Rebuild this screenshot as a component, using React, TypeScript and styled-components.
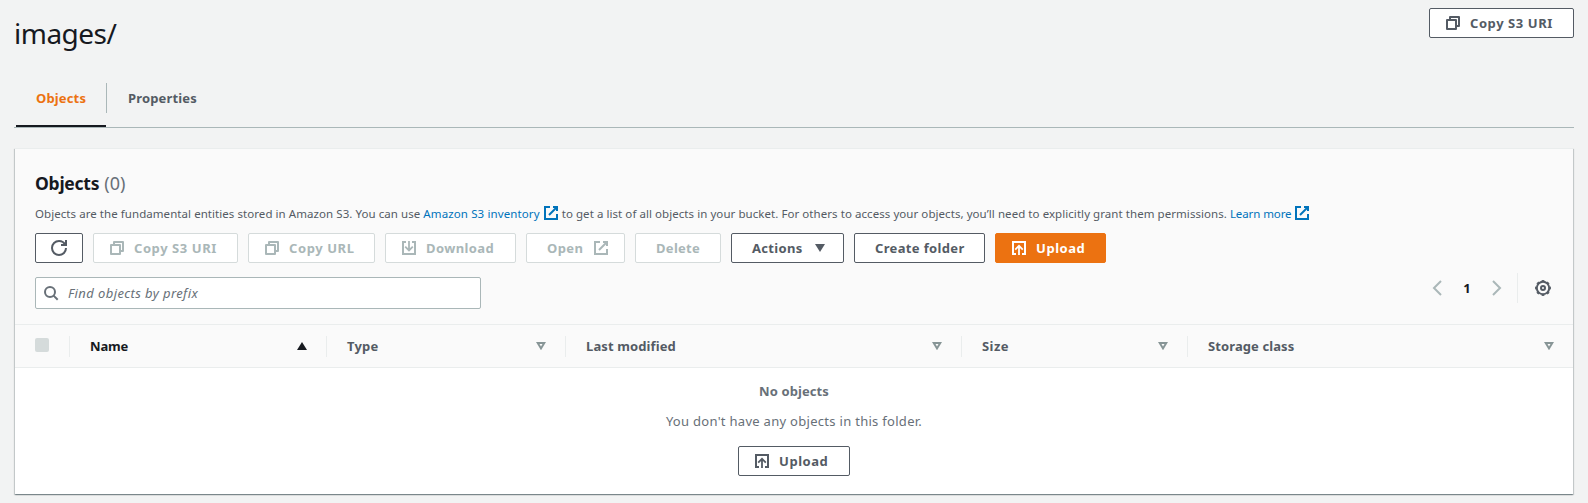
import React from 'react';
import styled, { createGlobalStyle, css } from 'styled-components';

const Global = createGlobalStyle`
  * { box-sizing: border-box; }
  body {
    margin: 0;
    background: #f2f3f3;
    color: #545b64;
    font-family: "Noto Sans", "Open Sans", sans-serif;
    font-size: 13px;
    line-height: 20px;
  }
`;

/* ---------- icons ---------- */

const Svg = styled.svg`
  display: block;
  flex: none;
  width: 16px;
  height: 16px;
  fill: none;
  stroke: currentColor;
  stroke-width: 2;
`;

const CopyIcon = () => (
  <Svg viewBox="0 0 16 16" strokeLinejoin="round">
    <path d="M2 5h9v9H2z" />
    <path d="M5 5V2h9v9h-3" />
  </Svg>
);
const DownloadIcon = () => (
  <Svg viewBox="0 0 16 16">
    <path d="M5 2H2v12h12V2h-3" />
    <path d="M8 1v9M4.2 6.6 8 10.4l3.8-3.8" strokeWidth="1.8" />
  </Svg>
);
const UploadIcon = () => (
  <Svg viewBox="0 0 16 16">
    <path d="M5 14H2V2h12v12h-3" />
    <path d="M8 15V6M4.2 9.6 8 5.8l3.8 3.8" strokeWidth="1.8" />
  </Svg>
);
const ExternalIcon = () => (
  <Svg viewBox="0 0 16 16">
    <path d="M10 2h4v4" />
    <path d="m6 10 8-8" />
    <path d="M14 9v5H2V2h5" />
  </Svg>
);
const RefreshIcon = () => (
  <Svg viewBox="0 0 16 16">
    <path d="M15 8c0 3.87-3.13 7-7 7s-7-3.13-7-7 3.13-7 7-7c2.79 0 5.2 1.63 6.33 4" />
    <path d="M10 5h5V0" />
  </Svg>
);
const SearchIcon = () => (
  <Svg viewBox="0 0 16 16">
    <circle cx="7" cy="7" r="5" />
    <path d="m10.6 10.6 4.1 4.1" />
  </Svg>
);
const ChevronIcon = ({ next }: { next?: boolean }) => (
  <Svg viewBox="0 0 16 16">
    <path d={next ? 'm4 1 7 7-7 7' : 'm12 1-7 7 7 7'} />
  </Svg>
);
const GearIcon = () => (
  <Svg viewBox="0 0 16 16">
    <circle cx="8" cy="8" r="6.2" />
    <circle cx="8" cy="8" r="7.3" strokeWidth="1.3" pathLength="80" strokeDasharray="5 5" strokeDashoffset="2.5" />
    <circle cx="8" cy="8" r="2" />
  </Svg>
);

const Triangle = styled.svg`
  display: block;
  flex: none;
  width: 10px;
  height: 8px;
`;
const CaretDown = () => (
  <Triangle viewBox="0 0 10 8">
    <path d="M0 0h10L5 8z" fill="currentColor" />
  </Triangle>
);
const SortedAsc = () => (
  <Triangle viewBox="0 0 10 8">
    <path d="M0 8h10L5 0z" fill="#16191f" />
  </Triangle>
);
const Sortable = () => (
  <Triangle viewBox="0 0 10 8">
    <path d="M0 0h10L5 8.3zM3.5 2 5 4.6 6.5 2z" fill="#879596" fillRule="evenodd" />
  </Triangle>
);

/* ---------- page ---------- */

const Page = styled.main`
  display: flex;
  flex-direction: column;
  height: 503px;
  padding: 8px 14px 0;
  overflow: hidden;
`;

const Header = styled.header`
  display: flex;
  justify-content: space-between;
  align-items: flex-start;
  height: 65px;
`;

const PageTitle = styled.h1`
  margin: 7px 0 0;
  color: #16191f;
  font-size: 28px;
  font-weight: 400;
  line-height: 36px;
  letter-spacing: -0.5px;
`;

const Tabs = styled.nav`
  display: flex;
  height: 55px;
  padding-left: 2px;
  border-bottom: 1px solid #aab7b8;
`;

const Tab = styled.a<{ $active?: boolean }>`
  display: flex;
  height: 54px;
  width: ${(p) => (p.$active ? 90 : 111)}px;
  padding: 15px 0 0 ${(p) => (p.$active ? 20 : 21)}px;
  color: ${(p) => (p.$active ? '#ec7211' : '#545b64')};
  border-bottom: ${(p) => (p.$active ? '2px solid #16191f' : '0')};
  font-weight: 700;
  letter-spacing: 0.15px;
`;

const TabDivider = styled.span`
  width: 1px;
  height: 30px;
  margin-top: 10px;
  background: #aab7b8;
`;

const Button = styled.button<{ $w: number; $kind?: 'disabled' | 'primary'; $text?: boolean; $ls?: number }>`
  display: flex;
  align-items: center;
  flex: none;
  gap: 9px;
  width: ${(p) => p.$w}px;
  height: 30px;
  padding: 0 15px 0 ${(p) => (p.$text ? 20 : 15)}px;
  border: 1px solid #545b64;
  border-radius: 2px;
  background: #fff;
  color: #545b64;
  font: 700 13px/20px "Noto Sans", "Open Sans", sans-serif;
  letter-spacing: ${(p) => p.$ls ?? 0.4}px;
  white-space: nowrap;
  ${(p) => p.$kind === 'disabled' && css`
    border-color: #d5dbdb;
    color: #aab7b8;
  `}
  ${(p) => p.$kind === 'primary' && css`
    border-color: #ec7211;
    background: #ec7211;
    color: #fff;
  `}
`;

const ButtonEnd = styled.span<{ $inset?: number }>`
  margin-left: auto;
  margin-right: ${(p) => p.$inset ?? 0}px;
`;

const Panel = styled.section`
  margin: 20px 1px 0;
  height: 346px;
  border-top: 1px solid #eaeded;
  background: #fff;
  box-shadow: 0 1px 1px 0 rgba(0, 28, 36, 0.3), 1px 1px 1px 0 rgba(0, 28, 36, 0.15),
    -1px 1px 1px 0 rgba(0, 28, 36, 0.15);
`;

const PanelHeader = styled.div`
  height: 176px;
  padding: 22px 20px 0;
  background: #fafafa;
  border-bottom: 1px solid #eaeded;
`;

const PanelTitle = styled.h2`
  display: flex;
  gap: 5px;
  margin: 0;
  color: #16191f;
  font-size: 17.5px;
  line-height: 24px;
  letter-spacing: -0.25px;
`;

const Counter = styled.span`
  color: #687078;
  font-weight: 400;
  font-size: 18px;
  letter-spacing: 0;
`;

const Description = styled.p`
  display: flex;
  align-items: center;
  height: 16px;
  margin: 11px 0 0;
  font-size: 11.5px;
  line-height: 16px;
  letter-spacing: 0.06px;
  white-space: nowrap;
`;

const Link = styled.a<{ $ls: number }>`
  display: flex;
  align-items: center;
  gap: 3px;
  margin: 0 3px;
  color: #0073bb;
  letter-spacing: ${(p) => p.$ls}px;
  svg { position: relative; top: -1px; }
`;

const Actions = styled.div`
  display: flex;
  gap: 10px;
  margin-top: 11px;
`;

const Filters = styled.div`
  display: flex;
  justify-content: space-between;
  align-items: flex-start;
  margin-top: 10px;
`;

const Search = styled.label`
  display: flex;
  align-items: center;
  gap: 9px;
  width: 446px;
  height: 32px;
  margin-top: 4px;
  padding: 0 7px;
  border: 1px solid #aab7b8;
  border-radius: 2px;
  background: #fff;
  color: #687078;
`;

const SearchInput = styled.input`
  flex: 1;
  padding: 0;
  border: 0;
  outline: 0;
  background: none;
  font: 13px/20px "Noto Sans", "Open Sans", sans-serif;
  letter-spacing: 0.4px;
  &::placeholder { color: #687078; font-style: italic; opacity: 1; }
`;

const Pagination = styled.div`
  display: flex;
  align-items: center;
  height: 30px;
  color: #aab7b8;
`;

const PageNumber = styled.span`
  width: 44px;
  color: #16191f;
  font-weight: 700;
  text-align: center;
`;

const Preferences = styled.span`
  display: flex;
  align-items: center;
  height: 30px;
  margin-left: 12px;
  padding: 0 2px 0 17px;
  border-left: 1px solid #eaeded;
  color: #545b64;
`;

const HeadRow = styled.div`
  display: grid;
  grid-template-columns: 55px 257px 239px 396px 226px 1fr;
  align-items: center;
  height: 43px;
  background: #fafafa;
  border-bottom: 1px solid #eaeded;
`;

const HeadCell = styled.div<{ $sorted?: boolean; $ls?: number }>`
  display: flex;
  align-items: center;
  justify-content: space-between;
  height: 21px;
  padding: 0 19px 0 20px;
  border-right: 1px solid #eaeded;
  color: ${(p) => (p.$sorted ? '#16191f' : '#545b64')};
  font-weight: 700;
  letter-spacing: ${(p) => p.$ls ?? 0.12}px;
  &:last-child { border-right: 0; }
`;

const Checkbox = styled.span`
  width: 14px;
  height: 14px;
  margin-bottom: 2px;
  border-radius: 2px;
  background: #d5dbdb;
`;

const Empty = styled.div`
  display: flex;
  flex-direction: column;
  align-items: center;
  padding-top: 13px;
  color: #687078;
`;

const EmptyTitle = styled.strong`
  font-weight: 700;
  letter-spacing: 0.1px;
`;

const EmptyText = styled.p`
  margin: 10px 0 15px;
  letter-spacing: 0.29px;
`;

export default function App() {
  return (
    <>
      <Global />
      <Page>
        <Header>
          <PageTitle>images/</PageTitle>
          <Button $w={145} $ls={0.57}><CopyIcon />Copy S3 URI</Button>
        </Header>
        <Tabs>
          <Tab $active>Objects</Tab>
          <TabDivider />
          <Tab>Properties</Tab>
        </Tabs>
        <Panel>
          <PanelHeader>
            <PanelTitle>Objects <Counter>(0)</Counter></PanelTitle>
            <Description>
              Objects are the fundamental entities stored in Amazon S3. You can use
              <Link $ls={0.12}>Amazon S3 inventory <ExternalIcon /></Link>
              to get a list of all objects in your bucket. For others to access your objects, you’ll need to explicitly grant them permissions.
              <Link $ls={-0.1}>Learn more <ExternalIcon /></Link>
            </Description>
            <Actions>
              <Button $w={48}><RefreshIcon /></Button>
              <Button $w={145} $kind="disabled" $ls={0.57}><CopyIcon />Copy S3 URI</Button>
              <Button $w={127} $kind="disabled" $ls={0.58}><CopyIcon />Copy URL</Button>
              <Button $w={131} $kind="disabled"><DownloadIcon />Download</Button>
              <Button $w={99} $kind="disabled" $text>Open<ButtonEnd><ExternalIcon /></ButtonEnd></Button>
              <Button $w={86} $kind="disabled" $text $ls={0.3}>Delete</Button>
              <Button $w={113} $text $ls={0.32}>Actions<ButtonEnd $inset={3}><CaretDown /></ButtonEnd></Button>
              <Button $w={131} $text $ls={0.35}>Create folder</Button>
              <Button $w={111} $kind="primary" $ls={0.55}><UploadIcon />Upload</Button>
            </Actions>
            <Filters>
              <Search>
                <SearchIcon />
                <SearchInput placeholder="Find objects by prefix" />
              </Search>
              <Pagination>
                <ChevronIcon />
                <PageNumber>1</PageNumber>
                <ChevronIcon next />
                <Preferences><GearIcon /></Preferences>
              </Pagination>
            </Filters>
          </PanelHeader>
          <HeadRow>
            <HeadCell><Checkbox /></HeadCell>
            <HeadCell $sorted $ls={-0.15}>Name<SortedAsc /></HeadCell>
            <HeadCell $ls={0.2}>Type<Sortable /></HeadCell>
            <HeadCell>Last modified<Sortable /></HeadCell>
            <HeadCell $ls={0.45}>Size<Sortable /></HeadCell>
            <HeadCell $ls={0.1}>Storage class<Sortable /></HeadCell>
          </HeadRow>
          <Empty>
            <EmptyTitle>No objects</EmptyTitle>
            <EmptyText>You don't have any objects in this folder.</EmptyText>
            <Button $w={112} $ls={0.55}><UploadIcon />Upload</Button>
          </Empty>
        </Panel>
      </Page>
    </>
  );
}
